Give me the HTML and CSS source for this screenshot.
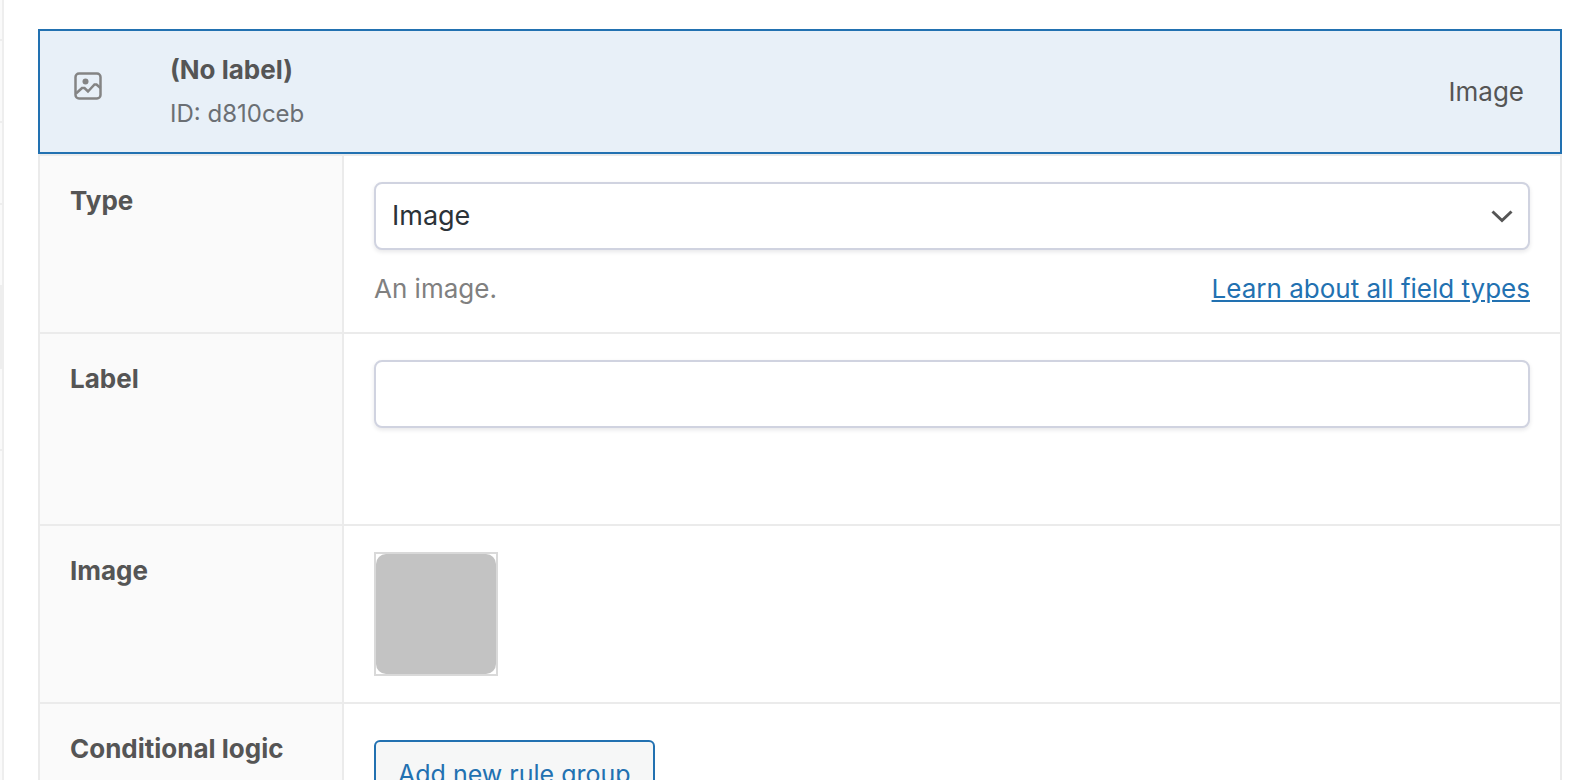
FILE: index.html
```html
<!DOCTYPE html>
<html lang="en">
<head>
<meta charset="utf-8">
<title>Edit field</title>
<link rel="stylesheet" href="styles.css">
</head>
<body>
<div class="app">
  <aside class="rail">
    <div class="rail-item rail-first"></div>
    <div class="rail-item"></div>
    <div class="rail-item"></div>
    <div class="rail-item"></div>
    <div class="rail-item rail-active"></div>
    <div class="rail-item"></div>
  </aside>
  <main class="main">
    <header class="field-head">
      <svg class="field-icon" viewBox="0 0 28 28" fill="none" stroke="#848484" stroke-width="2.500" aria-hidden="true">
        <rect x="1.500" y="1.500" width="25" height="25" rx="3.500"/>
        <path d="M2 21.500L8 16L10.500 16L14 19.500L20.500 12.500L22.500 12.500L26.500 16"/>
        <circle cx="11.500" cy="9.500" r="3" fill="#848484" stroke="none"/>
      </svg>
      <div class="field-title">
        <strong class="field-name">(No label)</strong>
        <span class="field-id">ID: d810ceb</span>
      </div>
      <span class="field-kind">Image</span>
    </header>
    <form class="settings">
      <div class="row">
        <label class="row-label" for="type">Type</label>
        <div class="row-body">
          <div class="select-wrap">
            <select class="control select" id="type"><option>Image</option></select>
            <svg class="chevron" viewBox="0 0 24 16" fill="none" stroke="#555" stroke-width="3" aria-hidden="true"><path d="M2.500 3.500L12 12.500L21.500 3.500"/></svg>
          </div>
          <div class="hint">
            <span>An image.</span>
            <a class="link" href="#">Learn about all field types</a>
          </div>
        </div>
      </div>
      <div class="row row-text">
        <label class="row-label" for="label">Label</label>
        <div class="row-body"><input class="control" id="label" type="text"></div>
      </div>
      <div class="row row-image">
        <label class="row-label" for="image">Image</label>
        <div class="row-body"><button class="thumb" id="image" type="button" aria-label="Choose image"><span class="thumb-fill"></span></button></div>
      </div>
      <div class="row row-logic">
        <label class="row-label" for="add-rule">Conditional logic</label>
        <div class="row-body"><button class="add" id="add-rule" type="button">Add new rule group</button></div>
      </div>
    </form>
  </main>
</div>
</body>
</html>
```
FILE: styles.css
```css
* { box-sizing: border-box; }
body {
  margin: 0;
  height: 100vh;
  overflow: hidden;
  background: #fff;
  color: #555;
  font: 26px/38px Inter, "Liberation Sans", sans-serif;
}
.app { display: flex; min-height: 100vh; }
.rail { width: 4px; flex: none; border-right: 2px solid #eee; background: #fafafa; }
.rail-item { height: 82px; border-bottom: 2px solid #eee; }
.rail-first { height: 41px; }
.rail-active { background: #eee; }
.main { flex: 1; min-width: 0; padding: 29px 30px 0 34px; }

.field-head {
  display: flex;
  align-items: center;
  height: 125px;
  padding: 0 36px 0 34px;
  border: 2px solid #2271b1;
  background: #e8f0f8;
}
.field-icon { width: 28px; height: 28px; margin: 0 68px 12px 0; flex: none; }
.field-title { display: flex; flex-direction: column; gap: 6px; flex: 1; padding-top: 1px; }
.field-id { color: #6b6f74; font-size: 24px; }

.settings { border: 2px solid #ebebeb; border-bottom: 0; }
.row { display: flex; min-height: 178px; border-bottom: 2px solid #ebebeb; }
.row-text { min-height: 192px; }
.row-label {
  flex: none;
  width: 304px;
  padding: 26px 16px 0 30px;
  border-right: 2px solid #ebebeb;
  background: #fafafa;
  font-weight: 700;
}
.field-name { font-weight: 700; }
.row-body { flex: 1; min-width: 0; padding: 26px 30px 0; }
.row-logic .row-body { padding-top: 36px; }

.control {
  display: block;
  width: 100%;
  height: 68px;
  margin: 0;
  padding: 0 16px;
  border: 2px solid #d0d3e0;
  border-radius: 8px;
  background: #fff;
  box-shadow: 0 2px 4px rgba(16, 24, 40, 0.1);
  color: #2c3338;
  font: inherit;
  font-size: 27px;
}
.select { appearance: none; }
.select-wrap { display: grid; align-items: center; }
.select-wrap > * { grid-area: 1 / 1; }
.chevron { width: 24px; height: 16px; margin-right: 16px; justify-self: end; pointer-events: none; }
.hint { display: flex; justify-content: space-between; margin-top: 20px; color: #808080; }
.link { color: #2271b1; }

.thumb {
  display: block;
  width: 124px;
  height: 124px;
  padding: 0;
  border: 2px solid #d9d9d9;
  background: #fff;
}
.thumb-fill { display: block; height: 100%; border-radius: 10px; background: #c3c3c3; }
.add {
  min-height: 68px;
  padding: 0 22px;
  border: 2px solid #2271b1;
  border-radius: 6px;
  background: #f6f7f7;
  color: #2271b1;
  font: inherit;
  font-size: 25px;
}
```
